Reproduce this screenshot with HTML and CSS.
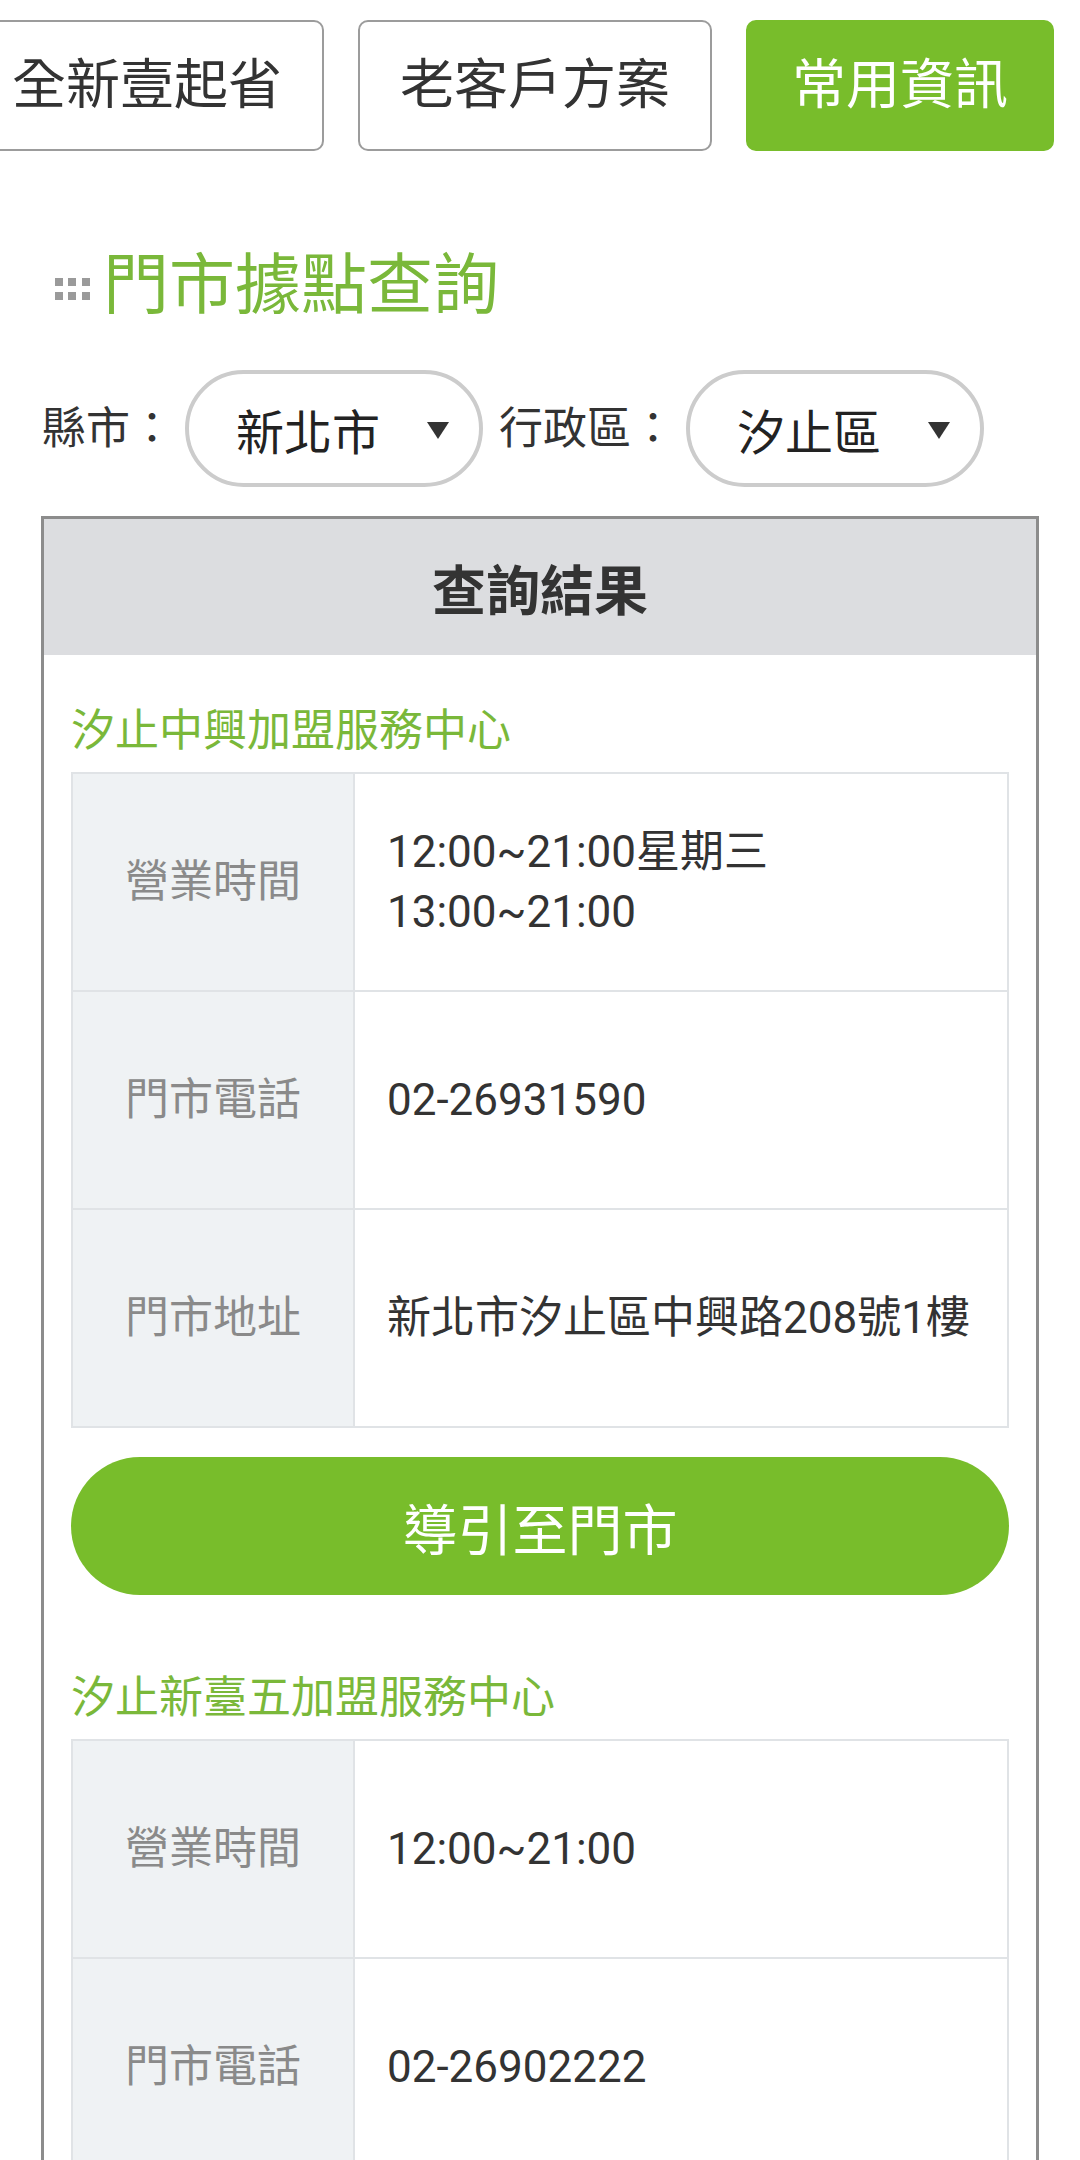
FILE: index.html
```html
<!DOCTYPE html>
<html lang="zh-Hant">
<head>
<meta charset="utf-8">
<title>門市據點查詢</title>
<link rel="stylesheet" href="styles.css">
</head>
<body>
<nav class="tabs">
  <div class="tab">全新壹起省</div>
  <div class="tab">老客戶方案</div>
  <div class="tab tab-active">常用資訊</div>
</nav>

<h1 class="title">
  <svg class="title-icon" width="36" height="22" viewBox="0 0 36 22">
    <rect x="0" y="0" width="8" height="8" fill="#9a9a9a"/>
    <rect x="13" y="0" width="8" height="8" fill="#9a9a9a"/>
    <rect x="27" y="0" width="8" height="8" fill="#9a9a9a"/>
    <rect x="0" y="14" width="8" height="8" fill="#9a9a9a"/>
    <rect x="13" y="14" width="8" height="8" fill="#9a9a9a"/>
    <rect x="27" y="14" width="8" height="8" fill="#9a9a9a"/>
  </svg>
  <span>門市據點查詢</span>
</h1>

<div class="filters">
  <span class="filter-label">縣市：</span>
  <div class="select"><span>新北市</span><span class="arrow"></span></div>
  <span class="filter-label">行政區：</span>
  <div class="select"><span>汐止區</span><span class="arrow"></span></div>
</div>

<section class="result">
  <div class="result-head">查詢結果</div>
  <div class="result-body">
    <div class="store">
      <div class="store-name">汐止中興加盟服務中心</div>
      <table class="info">
        <tr><th>營業時間</th><td>12:00~21:00星期三<br>13:00~21:00</td></tr>
        <tr><th>門市電話</th><td>02-26931590</td></tr>
        <tr><th>門市地址</th><td>新北市汐止區中興路208號1樓</td></tr>
      </table>
      <div class="nav-btn">導引至門市</div>
    </div>
    <div class="store">
      <div class="store-name store-name-next">汐止新臺五加盟服務中心</div>
      <table class="info">
        <tr><th>營業時間</th><td>12:00~21:00</td></tr>
        <tr><th>門市電話</th><td>02-26902222</td></tr>
      </table>
    </div>
  </div>
</section>
</body>
</html>
```

FILE: styles.css
```css
html, body {
  margin: 0;
  padding: 0;
  background: #ffffff;
}
body {
  width: 1080px;
  overflow: hidden;
  font-family: Roboto, "Noto Sans CJK TC", "Noto Sans", sans-serif;
  color: #333333;
}

.tabs {
  display: flex;
  gap: 34px;
  margin-left: -30px;
  padding-top: 20px;
  white-space: nowrap;
}
.tab {
  height: 127px;
  padding: 0 40px;
  border: 2px solid #9c9c9c;
  border-radius: 10px;
  display: flex;
  align-items: center;
  font-size: 54px;
  line-height: 1;
  color: #333333;
  flex: none;
}
.tab-active {
  background: #78bd2b;
  border-color: #78bd2b;
  color: #ffffff;
  padding: 0 44px;
}

.title {
  margin: 95px 0 0 0;
  padding-left: 55px;
  height: 80px;
  display: flex;
  align-items: center;
  gap: 12px;
  font-size: 66px;
  line-height: 80px;
  font-weight: normal;
  color: #7ab83a;
}
.title-icon {
  flex: none;
  margin-top: 6px;
}

.filters {
  display: flex;
  align-items: center;
  gap: 11px;
  margin-top: 44px;
  padding-left: 42px;
}
.filter-label {
  font-size: 44px;
  line-height: 60px;
  color: #333333;
}
.select {
  box-sizing: border-box;
  width: 298px;
  height: 117px;
  border: 4px solid #cccccc;
  border-radius: 60px;
  display: flex;
  align-items: center;
  justify-content: space-between;
  padding: 0 30px 0 47px;
  margin-right: 5px;
  font-size: 48px;
  color: #222222;
}
.arrow {
  width: 0;
  height: 0;
  border-left: 11px solid transparent;
  border-right: 11px solid transparent;
  border-top: 17px solid #333333;
  margin-top: 4px;
}

.result {
  margin: 29px 41px 0 41px;
  border: 3px solid #8c8c8c;
  border-bottom: none;
}
.result-head {
  height: 136px;
  background: #dcdde0;
  display: flex;
  align-items: center;
  justify-content: center;
  font-size: 54px;
  font-weight: bold;
  color: #333333;
}
.result-body {
  padding: 0 27px 40px 27px;
}
.store-name {
  margin-top: 46px;
  margin-bottom: 11px;
  font-size: 44px;
  line-height: 60px;
  color: #7ab83a;
}
.store-name-next {
  margin-top: 73px;
}

.info {
  width: 100%;
  border-collapse: collapse;
  font-size: 44px;
  line-height: 60px;
}
.info th,
.info td {
  height: 216px;
  border: 2px solid #e0e3e6;
  padding: 0;
}
.info th {
  width: 280px;
  background: #eff2f4;
  color: #8a8a8a;
  font-weight: normal;
  text-align: center;
}
.info td {
  padding-left: 32px;
  color: #333333;
  text-align: left;
  white-space: nowrap;
}

.nav-btn {
  margin-top: 29px;
  height: 138px;
  border-radius: 69px;
  background: #78bd2b;
  color: #ffffff;
  font-size: 55px;
  display: flex;
  align-items: center;
  justify-content: center;
}
```
